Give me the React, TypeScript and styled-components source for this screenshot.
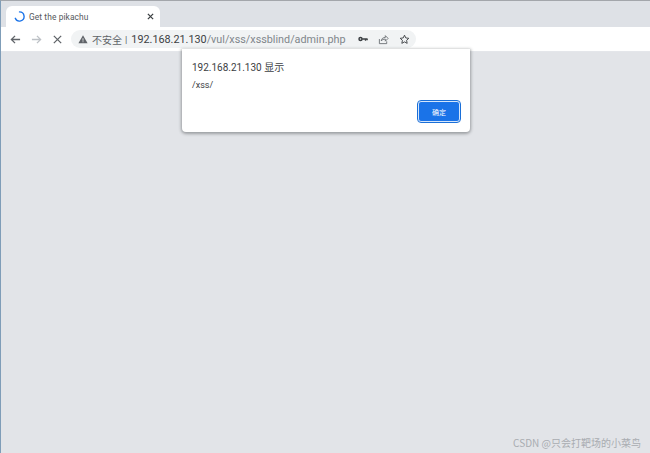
import React from "react";
import styled, { createGlobalStyle } from "styled-components";

const Global = createGlobalStyle`
  html, body { margin: 0; padding: 0; width: 650px; height: 453px; overflow: hidden; }
  body { font-family: "Roboto", "Noto Sans CJK SC", sans-serif; }
`;

const Window = styled.div`
  position: relative;
  width: 650px;
  height: 453px;
  display: flex;
  flex-direction: column;
  box-sizing: border-box;
  border-top: 1px solid #a3a6ab;
  border-left: 1px solid #7f9db8;
  overflow: hidden;
  background: #e2e4e8;
`;

const TabStrip = styled.div`
  height: 26px;
  box-sizing: border-box;
  background: #dee1e6;
  padding: 5px 0 0 5px;
  display: flex;
  align-items: stretch;
`;

const Tab = styled.div`
  width: 154px;
  background: #fff;
  border-radius: 6px 6px 0 0;
  display: flex;
  align-items: center;
  box-sizing: border-box;
  padding: 0 5px 0 8px;
  gap: 4px;
`;

const TabTitle = styled.span`
  flex: 1;
  font-size: 8.4px;
  color: #55585c;
  letter-spacing: 0.1px;
  white-space: nowrap;
`;

const Toolbar = styled.div`
  height: 25px;
  background: #fff;
  border-bottom: 1px solid #e4e6ea;
  box-sizing: border-box;
  display: flex;
  align-items: center;
  padding-left: 9px;
`;

const NavButton = styled.span<{ $gap: number }>`
  width: 11px;
  height: 11px;
  margin-right: ${(p) => p.$gap}px;
  display: flex;
`;

const AddressBar = styled.div`
  width: 345px;
  height: 18px;
  background: #f1f3f4;
  border-radius: 9px;
  display: flex;
  align-items: center;
  box-sizing: border-box;
  padding: 0 6px 0 7px;
`;

const Insecure = styled.span`
  font-size: 10px;
  color: #5f6368;
  margin-left: 4px;
  white-space: nowrap;
`;

const Divider = styled.span`
  font-size: 9.5px;
  color: #5f6368;
  margin-left: 3px;
`;

const Url = styled.span`
  flex: 1;
  font-size: 10.8px;
  color: #80868b;
  margin-left: 4px;
  white-space: nowrap;
`;

const Host = styled.span`
  color: #3c4043;
`;

const AddressIcons = styled.div`
  display: flex;
  align-items: center;
  gap: 10px;
`;

const Page = styled.div`
  flex: 1;
  background: #e2e4e8;
`;

const Dialog = styled.div`
  position: absolute;
  left: 181px;
  top: 48px;
  width: 288px;
  height: 83px;
  box-sizing: border-box;
  background: #fff;
  border-radius: 0 0 4px 4px;
  box-shadow: 0 1px 3px 1px rgba(60, 64, 67, 0.42);
  padding: 12px 10px 0 10px;
  display: flex;
  flex-direction: column;
`;

const DialogTitle = styled.div`
  font-size: 10px;
  line-height: 13px;
  color: #3c4043;
`;

const DialogMessage = styled.div`
  font-size: 9px;
  line-height: 12px;
  color: #3c4043;
  margin-top: 5px;
`;

const DialogActions = styled.div`
  display: flex;
  justify-content: flex-end;
  margin-top: 10px;
`;

const OkButton = styled.button`
  width: 42px;
  height: 21px;
  box-sizing: border-box;
  border: 1px solid #d5e6fb;
  outline: 1px solid #1a6fd8;
  outline-offset: 0;
  border-radius: 3px;
  background: #1a73e8;
  color: #fff;
  font-family: "Noto Sans CJK SC", sans-serif;
  font-size: 7px;
  padding: 0;
`;

const Watermark = styled.div`
  position: absolute;
  right: 9px;
  bottom: 3px;
  font-family: "Noto Sans CJK SC", sans-serif;
  font-size: 10px;
  line-height: 14px;
  color: #a9acb1;
  white-space: nowrap;
`;

const Ico: React.FC<{ s?: number; c?: string; w?: number; children: React.ReactNode }> = ({ s = 11, c = "#5f6368", w = 1.4, children }) => (
  <svg width={s} height={s} viewBox="0 0 12 12" fill="none" stroke={c} strokeWidth={w} style={{ display: "block", flex: "none" }}>
    {children}
  </svg>
);

export default function App() {
  return (
    <Window>
      <Global />
      <TabStrip>
        <Tab>
          <svg width="11" height="11" viewBox="0 0 12 12" fill="none" stroke="#1a73e8" strokeWidth="1.5" style={{ flex: "none" }}>
            <path d="M6 1a5 5 0 1 1-4.6 7" strokeLinecap="round" />
          </svg>
          <TabTitle>Get the pikachu</TabTitle>
          <Ico s={9} c="#3c4043" w={1.7}>
            <path d="M2.5 2.5l7 7M9.5 2.5l-7 7" />
          </Ico>
        </Tab>
      </TabStrip>
      <Toolbar>
        <NavButton $gap={10}>
          <Ico><path d="M11 6H1.5M5.5 2L1.5 6l4 4" /></Ico>
        </NavButton>
        <NavButton $gap={10}>
          <Ico c="#bdc1c6"><path d="M1 6h9.5M6.5 2l4 4-4 4" /></Ico>
        </NavButton>
        <NavButton $gap={8}>
          <Ico><path d="M2 2l8 8M10 2l-8 8" /></Ico>
        </NavButton>
        <AddressBar>
          <svg width="10" height="10" viewBox="0 0 12 12" style={{ flex: "none" }}>
            <path d="M6 1.5L11.5 11H.5z" fill="#5f6368" />
            <path d="M5.5 5h1v3h-1zM5.5 8.8h1v1h-1z" fill="#f1f3f4" />
          </svg>
          <Insecure>不安全</Insecure>
          <Divider>|</Divider>
          <Url><Host>192.168.21.130</Host>/vul/xss/xssblind/admin.php</Url>
          <AddressIcons>
            <svg width="10" height="10" viewBox="0 0 12 12" fill="none" stroke="#3c4043" style={{ flex: "none" }}>
              <circle cx="3" cy="6" r="1.8" strokeWidth="1.8" />
              <path d="M5 6h6.5M9 6v2M11 6v1.5" strokeWidth="1.6" />
            </svg>
            <Ico s={11} w={0.9}>
              <path d="M1.5 5.5v5h8V8M3.5 7.5c.3-2.5 2-3.7 4.5-3.7V1.8l3 3-3 3V5.6c-2 0-3.4.5-4.5 1.9z" />
            </Ico>
            <Ico s={11} c="#3c4043" w={1}>
              <path d="M6 1.3l1.4 3 3.3.4-2.4 2.2.6 3.3L6 8.6l-2.9 1.6.6-3.3L1.3 4.7l3.3-.4z" />
            </Ico>
          </AddressIcons>
        </AddressBar>
      </Toolbar>
      <Page />
      <Dialog>
        <DialogTitle>192.168.21.130 显示</DialogTitle>
        <DialogMessage>/xss/</DialogMessage>
        <DialogActions>
          <OkButton>确定</OkButton>
        </DialogActions>
      </Dialog>
      <Watermark>CSDN @只会打靶场的小菜鸟</Watermark>
    </Window>
  );
}
